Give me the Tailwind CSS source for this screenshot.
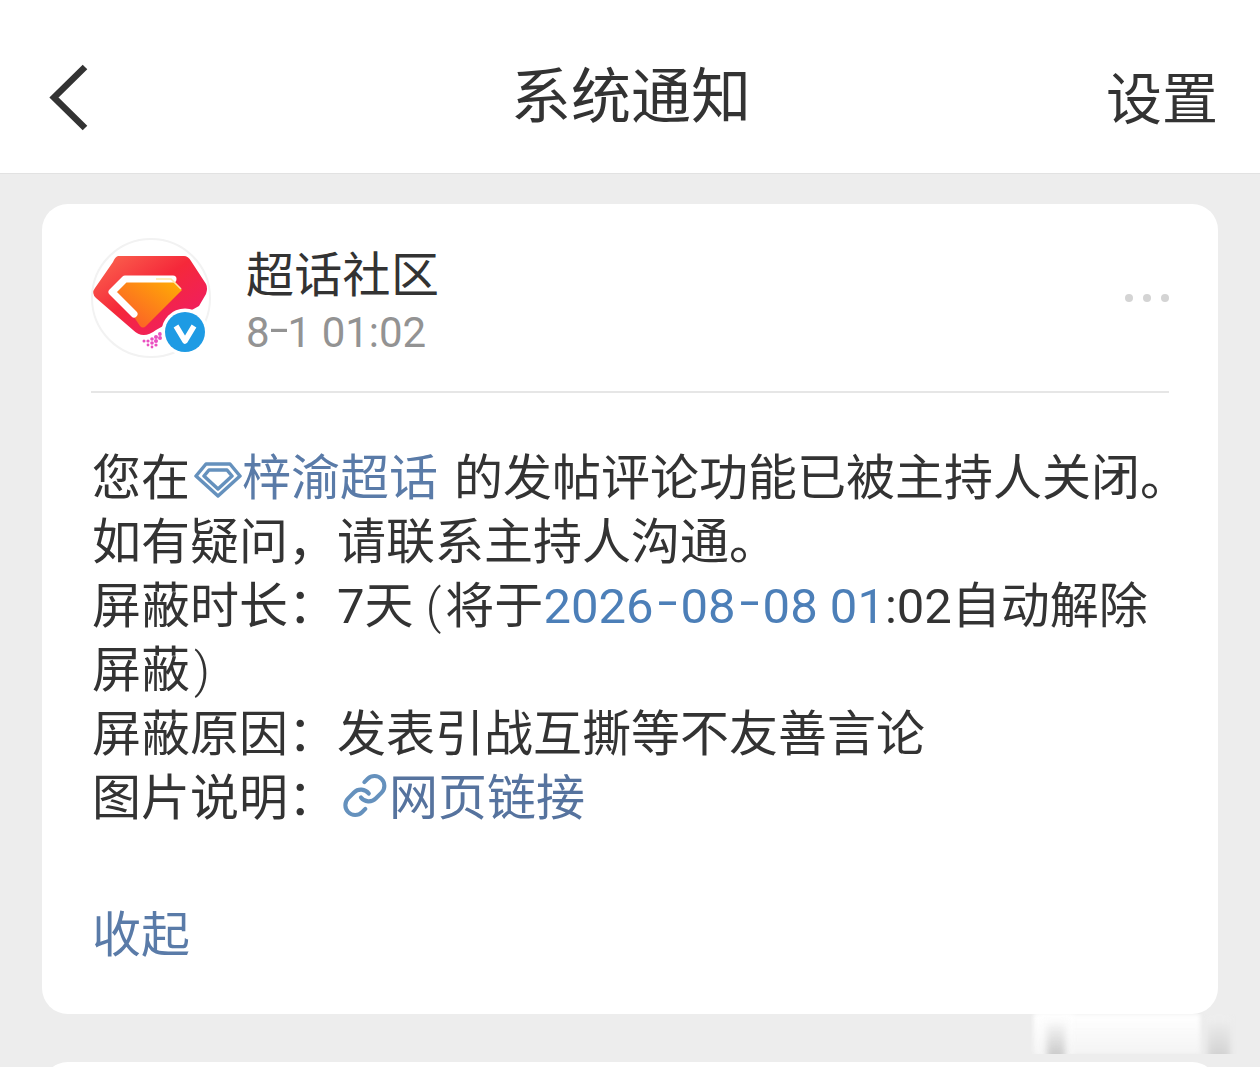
<!DOCTYPE html>
<html lang="zh-CN"><head><meta charset="utf-8">
<script src="https://cdn.jsdelivr.net/npm/@tailwindcss/browser@4"></script>
</head>
<body class="m-0">
<div class="relative w-[1260px] h-[1067px] overflow-hidden bg-[#ededed] font-['Roboto','Noto_Sans_CJK_SC',sans-serif] text-[#333333]">
  <header class="h-[174px] bg-white border-b border-[#e2e2e2] flex items-center pl-[44px] pr-[44px] pt-[22px]">
    <div class="flex-1"><svg width="46" height="70" viewBox="0 0 46 70" class="block text-[#333]"><path d="M41 4 L10 34.5 L41 65" fill="none" stroke="currentColor" stroke-width="6.5"/></svg></div>
    <h1 class="text-[60px] leading-[70px] font-normal pt-[1px]">系统通知</h1>
    <div class="flex-1 text-right text-[56px] leading-[70px] pt-[4px] -mr-[2px]">设置</div>
  </header>
  <main class="mt-[30px] mx-[42px] h-[810px] bg-white rounded-[26px] px-[49px] pt-[34px]">
    <div class="flex items-center h-[120px] relative">
      <div class="relative w-[120px] h-[120px] rounded-full border-2 border-[#f2f2f2] shrink-0">
        <svg width="120" height="120" viewBox="0 0 120 120" class="absolute -left-[2px] -top-[2px]">
          <defs>
            <linearGradient id="r" x1="0" y1="0" x2="1" y2="1"><stop offset="0" stop-color="#fb6a50"/><stop offset=".45" stop-color="#f5283a"/><stop offset="1" stop-color="#ee1a70"/></linearGradient>
            <linearGradient id="o" x1="0" y1="1" x2="1" y2="0"><stop offset="0" stop-color="#fb5030"/><stop offset="1" stop-color="#ffb400"/></linearGradient>
          </defs>
          <path d="M27 18 H93 Q97 18 100 23 L115 46 Q117 50 115 56 L108 68 L65 92 Q52 102 42 92 L5 60 Q0 55 4 50 L22 24 Q24 19 27 18Z" fill="url(#r)"/>
          <path d="M36 39 H80 L91 52 L55 88 Q52 91 49 88 L43 79 L21 54Z" fill="url(#o)"/>
          <path d="M82 41 H34 L21 54 L43 76" fill="none" stroke="#fff" stroke-width="7" stroke-linecap="round" stroke-linejoin="round"/>
          <path d="M65 41 H80 L90 51" fill="none" stroke="#ffe6a8" stroke-width="1.5"/>
          <g fill="#ea4fc0">
            <circle cx="53" cy="103" r="1.5"/><circle cx="57" cy="103" r="1.6"/><circle cx="61" cy="101" r="1.8"/><circle cx="65" cy="99" r="2"/><circle cx="69" cy="96" r="2"/><circle cx="73" cy="93" r="2"/>
            <circle cx="57" cy="107" r="1.4"/><circle cx="61" cy="105" r="1.8"/><circle cx="65" cy="103" r="2"/><circle cx="69" cy="100" r="2"/><circle cx="61" cy="109" r="1.4"/><circle cx="65" cy="107" r="1.6"/><circle cx="73" cy="97" r="2"/>
          </g>
          <circle cx="94" cy="94" r="23.5" fill="#fff"/>
          <circle cx="94" cy="94" r="20" fill="#1e9be4"/>
          <path d="M85 88 L94 103 L103 88" fill="none" stroke="#fff" stroke-width="5.5" stroke-linejoin="round"/>
        </svg>
      </div>
      <div class="ml-[35px] mt-[10px]">
        <div class="text-[48px] leading-[60px] tracking-[0.3px]">超话社区</div>
        <div class="text-[42px] leading-[54px] text-[#939393]">8<span class="inline-block w-[18px] text-center scale-x-[1.6] -translate-y-[4px]">-</span>1 01:02</div>
      </div>
      <div class="ml-auto flex gap-[10px]">
        <span class="w-[8px] h-[8px] rounded-full bg-[#d4d4d4]"></span>
        <span class="w-[8px] h-[8px] rounded-full bg-[#d4d4d4]"></span>
        <span class="w-[8px] h-[8px] rounded-full bg-[#d4d4d4]"></span>
      </div>
    </div>
    <div class="h-[2px] bg-[#e6e6e6] mt-[33px]"></div>
    <div class="mt-[54px] pl-[1px] text-[49px] leading-[64px] whitespace-nowrap">
      <p>您在<svg width="52" height="40" viewBox="0 0 52 40" class="inline align-[-4px] text-[#6591bd]"><path d="M16 5 H40 L50 17 L28 37 L6 17Z M19 11 H37 L42 17 L28 30 L14 17Z" fill="none" stroke="currentColor" stroke-width="3.5" stroke-linejoin="round"/></svg><span class="text-[#5a7ba8]">梓渝超话</span><span class="ml-[16px]">的发帖评论功能已被主持人关闭。</span></p>
      <p>如有疑问，请联系主持人沟通。</p>
      <p>屏蔽时长：7天 <span class="font-light mr-[4px]">(</span>将于<span class="text-[#4c7fb8]">2026<span class="inline-block w-[27px] text-center scale-x-[1.45] -translate-y-[5px]">-</span>08<span class="inline-block w-[27px] text-center scale-x-[1.45] -translate-y-[5px]">-</span>08 01</span>:02自动解除</p>
      <p>屏蔽<span class="font-light ml-[4px]">)</span></p>
      <p>屏蔽原因：发表引战互撕等不友善言论</p>
      <p>图片说明：<svg width="52" height="50" viewBox="0 0 26.5 25.5" class="inline align-[-5px] text-[#6591bd]"><g transform="translate(2.2 1)" fill="none" stroke="currentColor" stroke-width="2.1" stroke-linecap="round" stroke-linejoin="round"><path d="M10 13a5 5 0 0 0 7.54.54l3-3a5 5 0 0 0-7.07-7.07l-1.72 1.71"/><path d="M14 11a5 5 0 0 0-7.54-.54l-3 3a5 5 0 0 0 7.07 7.07l1.71-1.71"/></g></svg><span class="text-[#56739e]">网页链接</span></p>
    </div>
    <div class="mt-[73px] pl-[1px] text-[49px] leading-[64px] text-[#5a7ba8]">收起</div>
  </main>
  <div class="absolute left-[42px] top-[1062px] w-[1176px] h-[40px] bg-white rounded-t-[26px]"></div>
  <div class="absolute left-[1020px] top-[1014px] w-[220px] h-[40px] overflow-hidden">
    <div class="absolute left-[14px] top-0 w-[166px] h-[40px] bg-gradient-to-b from-white to-white/40 blur-[2px]"></div>
    <div class="absolute left-[16px] top-0 w-[38px] h-[46px] bg-gradient-to-b from-white to-[#f4f4f4] blur-[3px]"></div>
    <div class="absolute left-[27px] top-[6px] w-[18px] h-[44px] bg-gradient-to-b from-transparent to-[#c0c0c0] blur-[3px]"></div>
    <div class="absolute left-[188px] top-[2px] w-[22px] h-[48px] bg-gradient-to-b from-[#f0f0f0] to-[#cccccc] blur-[3px]"></div>
  </div>
</div>
</body></html>
